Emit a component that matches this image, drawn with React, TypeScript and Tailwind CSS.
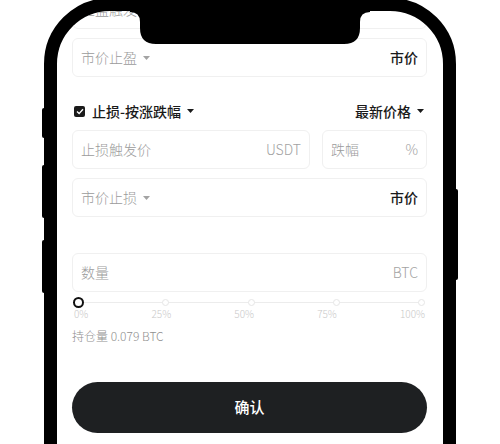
import type { ReactNode } from "react";

const font = { fontFamily: '"Noto Sans CJK SC", "Noto Sans", sans-serif' };

function Caret({ dark = false }: { dark?: boolean }) {
  return (
    <svg width="7" height="4" viewBox="0 0 7 4" className="ml-[6px]">
      <path d="M0 0 H7 L3.5 4 Z" fill={dark ? "#1a1a1a" : "#a3a3a3"} />
    </svg>
  );
}

function Field({ left, right, className = "" }: { left: ReactNode; right?: ReactNode; className?: string }) {
  return (
    <div className={`flex h-[39px] items-center justify-between rounded-[6px] border border-[#f0f0f0] px-[8px] ${className}`}>
      <div className="flex items-center text-[14px] font-light text-[#9b9b9b]">{left}</div>
      <div className="text-[14px]">{right}</div>
    </div>
  );
}

const marks = ["0%", "25%", "50%", "75%", "100%"];

export default function App() {
  return (
    <div className="relative h-[444px] w-[500px] overflow-hidden bg-white" style={font}>
      {/* phone body */}
      <div className="ml-[44px] mt-[-2px] h-[520px] w-[412px] overflow-hidden rounded-t-[66px] border-[13px] border-black bg-white">
        <div className="px-[15px] pr-[16px]">
          <Field className="mt-[-21px]" left={<span>止盈触发价</span>} />
          <Field
            className="mt-[9px]"
            left={<><span>市价止盈</span><Caret /></>}
            right={<span className="font-medium text-[#1a1a1a]">市价</span>}
          />

          <div className="mt-[24px] flex h-[20px] items-center justify-between pr-[3px]">
            <div className="flex items-center">
              <span className="ml-[2px] flex h-[11px] w-[11px] items-center justify-center rounded-[2px] bg-[#1a1a1a]">
                <svg width="8" height="7" viewBox="0 0 8 7">
                  <path d="M1 3.6 L3.1 5.6 L7 1.2" stroke="white" strokeWidth="1.4" fill="none" />
                </svg>
              </span>
              <span className="ml-[7px] text-[14px] font-medium text-[#1a1a1a]">止损-按涨跌幅</span>
              <Caret dark />
            </div>
            <div className="flex items-center">
              <span className="text-[14px] font-medium text-[#1a1a1a]">最新价格</span>
              <Caret dark />
            </div>
          </div>

          <div className="mt-[9px] flex gap-[12px]">
            <Field
              className="flex-1"
              left={<span>止损触发价</span>}
              right={<span className="font-light text-[#a3a3a3]">USDT</span>}
            />
            <Field
              className="w-[105px]"
              left={<span>跌幅</span>}
              right={<span className="font-light text-[#a3a3a3]">%</span>}
            />
          </div>
          <Field
            className="mt-[9px]"
            left={<><span>市价止损</span><Caret /></>}
            right={<span className="font-medium text-[#1a1a1a]">市价</span>}
          />

          <Field
            className="mt-[36px]"
            left={<span>数量</span>}
            right={<span className="font-light text-[#a3a3a3]">BTC</span>}
          />

          {/* slider */}
          <div className="relative mt-[4px] h-[12px] pl-[1px] pr-[2px]">
            <div className="flex h-full items-center">
              <div className="relative flex flex-1 items-center justify-between">
                <div className="absolute left-[6px] right-[3px] h-[1px] bg-[#ececec]" />
                <span className="relative z-10 h-[11px] w-[11px] rounded-full border-2 border-[#111] bg-white" />
                <span className="relative z-10 h-[7px] w-[7px] rounded-full border border-[#e6e6e6] bg-white" />
                <span className="relative z-10 h-[7px] w-[7px] rounded-full border border-[#e6e6e6] bg-white" />
                <span className="relative z-10 h-[7px] w-[7px] rounded-full border border-[#e6e6e6] bg-white" />
                <span className="relative z-10 h-[7px] w-[7px] rounded-full border border-[#e6e6e6] bg-white" />
              </div>
            </div>
          </div>
          <div className="flex h-[12px] items-center justify-between pl-[2px] pr-[2px] text-[10px] font-light leading-none text-[#c9c9c9]">
            {marks.map((m) => (
              <span key={m}>{m}</span>
            ))}
          </div>

          <div className="mt-[8px] h-[16px] text-[12px] font-light leading-[16px] text-[#8f8f8f]">持仓量 0.079 BTC</div>

          <button className="mt-[38px] flex h-[51px] w-full items-center justify-center rounded-full bg-[#1e2022] text-[15px] font-medium text-white">
            确认
          </button>
        </div>
      </div>

      {/* notch */}
      <svg className="absolute left-[130px] top-0" width="240" height="45" viewBox="0 0 240 45">
        <path d="M0 12 Q10 12 10 22 L10 28 Q10 44 26 44 L214 44 Q230 44 230 28 L230 22 Q230 12 240 12 L240 0 L0 0 Z" fill="#000" />
      </svg>

      {/* side buttons */}
      <div className="absolute left-[42px] top-[108px] h-[30px] w-[3px] rounded-l-[2px] bg-black" />
      <div className="absolute left-[42px] top-[165px] h-[53px] w-[3px] rounded-l-[2px] bg-black" />
      <div className="absolute left-[42px] top-[240px] h-[53px] w-[3px] rounded-l-[2px] bg-black" />
      <div className="absolute left-[455px] top-[189px] h-[91px] w-[3px] rounded-r-[2px] bg-black" />
    </div>
  );
}
